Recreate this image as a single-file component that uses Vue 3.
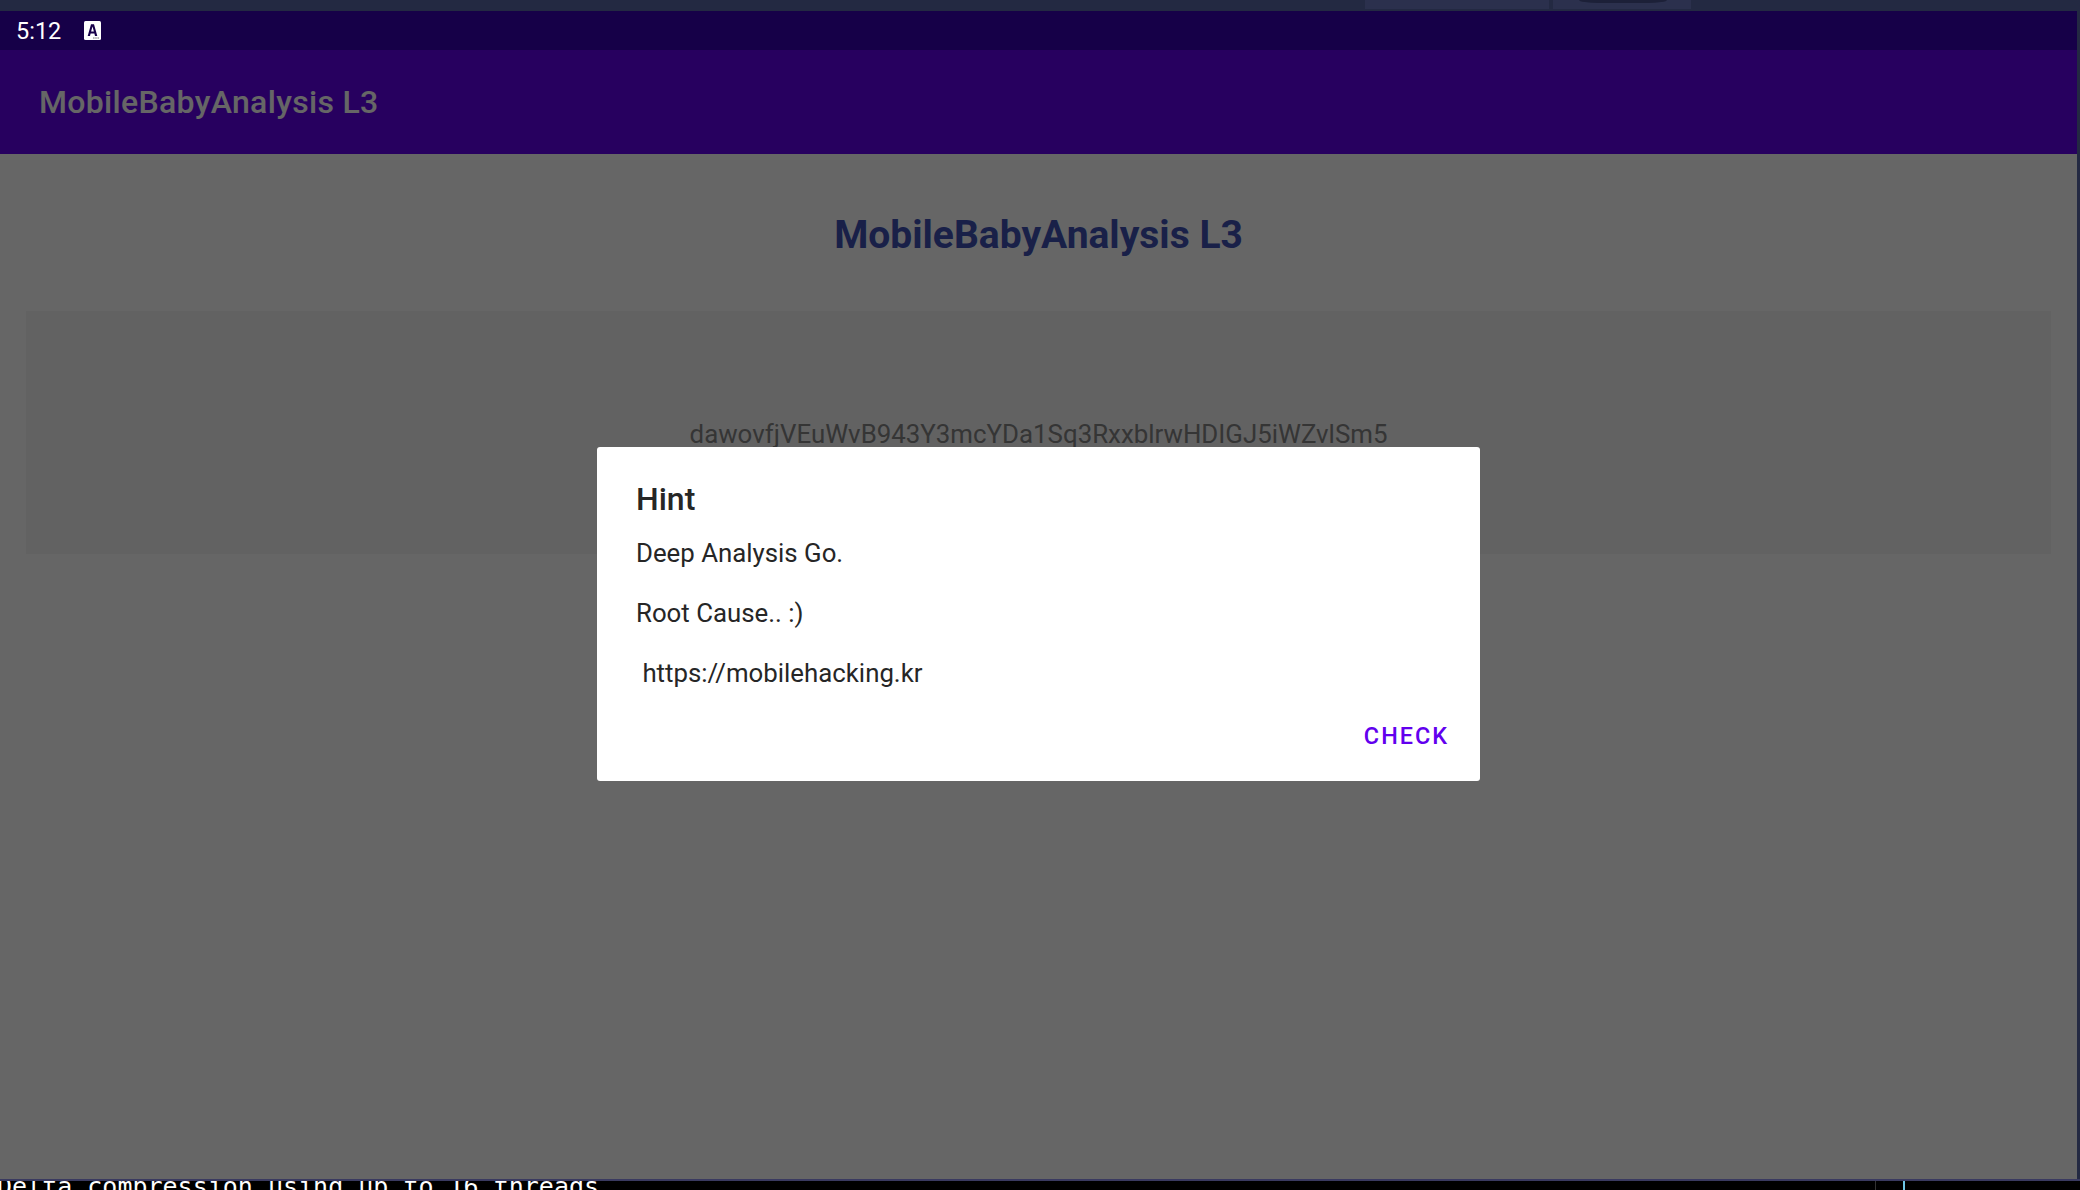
<script setup>
const title = 'MobileBabyAnalysis L3'
const hintLines = ['Deep Analysis Go.', 'Root Cause.. :)', ' https://mobilehacking.kr']
</script>

<template>
  <div class="desktop">
    <div class="topstrip">
      <div class="tab tab1"></div>
      <div class="tab tab2"><span class="notch"></span></div>
    </div>
    <div class="screen">
      <div class="statusbar"></div>
      <div class="appbar">{{ title }}</div>
      <div class="content">
        <h1>{{ title }}</h1>
        <div class="card">dawovfjVEuWvB943Y3mcYDa1Sq3RxxblrwHDIGJ5iWZvlSm5</div>
      </div>
      <div class="scrim"></div>
      <div class="status-items">
        <span class="time">5:12</span>
        <svg class="a-icon" width="17" height="19" viewBox="0 0 17 19">
          <rect width="17" height="19" rx="1.5" fill="#fff" />
          <path d="M7 3.3H10L13.3 15H11L10.4 12.6H6.6L6 15H3.7ZM7.1 10.4H9.9L8.5 5.6Z" fill="#17004a" fill-rule="evenodd" />
          <path d="M9 16.4h1.6v1.2H9zM11.2 16.4h1.6v1.2H11.2zM13.4 16.4h1.6v1.2H13.4z" fill="#777" />
        </svg>
      </div>
      <div class="dialog">
        <div class="dialog-title">Hint</div>
        <p v-for="line in hintLines" :key="line" class="dialog-line">{{ line }}</p>
        <div class="dialog-actions"><button>CHECK</button></div>
      </div>
    </div>
    <div class="terminal">
      <span class="term-text">Delta compression using up to 16 threads</span>
      <span class="rule grey"></span>
      <span class="rule blue"></span>
    </div>
  </div>
</template>

<style scoped>
.desktop {
  width: 2080px;
  height: 1190px;
  display: flex;
  flex-direction: column;
  background: #232942;
  overflow: hidden;
  font-family: Roboto, sans-serif;
}
.topstrip {
  height: 11px;
  flex: none;
  display: flex;
  align-items: flex-start;
  gap: 4px;
  padding-left: 1365px;
}
.tab {
  height: 9px;
  background: #2b304d;
  position: relative;
}
.tab1 { width: 184px; }
.tab2 { width: 138px; }
.notch {
  position: absolute;
  left: 26px;
  top: 0;
  width: 88px;
  height: 3px;
  background: #1c2038;
  border-radius: 0 0 20px 20px / 0 0 3px 3px;
}
.screen {
  position: relative;
  width: 2077px;
  height: 1168px;
  flex: none;
  background: #fff;
  display: flex;
  flex-direction: column;
}
.statusbar {
  height: 39px;
  flex: none;
  background: #3700b3;
}
.appbar {
  height: 104px;
  flex: none;
  background: #6200ee;
  color: #fff;
  padding-left: 39px;
  display: flex;
  align-items: center;
  font-size: 32px;
  font-weight: 500;
  letter-spacing: 0.32px;
}
.content {
  flex: 1;
  padding: 0 26px;
}
h1 {
  margin: 0;
  padding-top: 58px;
  height: 157px;
  box-sizing: border-box;
  text-align: center;
  font-size: 39px;
  font-weight: 700;
  line-height: 46px;
  color: #3f51b5;
}
.card {
  height: 243px;
  padding-top: 2px;
  box-sizing: border-box;
  background: #f5f5f5;
  display: flex;
  align-items: center;
  justify-content: center;
  font-size: 25.85px;
  color: #858585;
}
.scrim {
  position: absolute;
  inset: 0;
  background: rgba(0, 0, 0, 0.6);
}
.status-items {
  position: absolute;
  left: 16px;
  top: 0;
  height: 39px;
  display: flex;
  align-items: center;
  gap: 24px;
  color: #fff;
}
.time {
  font-size: 23.5px;
  width: 44px;
  padding-top: 1px;
}
.a-icon { display: block; }
.dialog {
  position: absolute;
  left: 597px;
  top: 436px;
  width: 883px;
  height: 334px;
  box-sizing: border-box;
  padding: 31px 31px 0 39px;
  background: #fff;
  border-radius: 3px;
  color: #262626;
}
.dialog-title {
  font-size: 32px;
  font-weight: 500;
  line-height: 42px;
  margin-bottom: 18px;
}
.dialog-line {
  margin: 0 0 30px;
  font-size: 25.8px;
  line-height: 30px;
  white-space: pre;
}
.dialog-actions {
  display: flex;
  justify-content: flex-end;
  margin-top: 34px;
}
button {
  border: none;
  background: none;
  padding: 0;
  font-family: inherit;
  font-size: 23.4px;
  line-height: 28px;
  font-weight: 500;
  letter-spacing: 2px;
  color: #6200ee;
}
.terminal {
  position: relative;
  flex: 1;
  background: #000;
  border-top: 2px solid #3a3a60;
  overflow: hidden;
}
.term-text {
  position: absolute;
  left: -3px;
  top: -9px;
  font-family: "DejaVu Sans Mono", monospace;
  font-size: 25px;
  line-height: 30px;
  color: #fff;
  white-space: pre;
}
.rule {
  position: absolute;
  top: 0;
  bottom: 0;
}
.rule.grey { left: 1875px; width: 1px; background: #333; }
.rule.blue { left: 1903px; width: 2px; background: #6ec6e6; }
</style>
